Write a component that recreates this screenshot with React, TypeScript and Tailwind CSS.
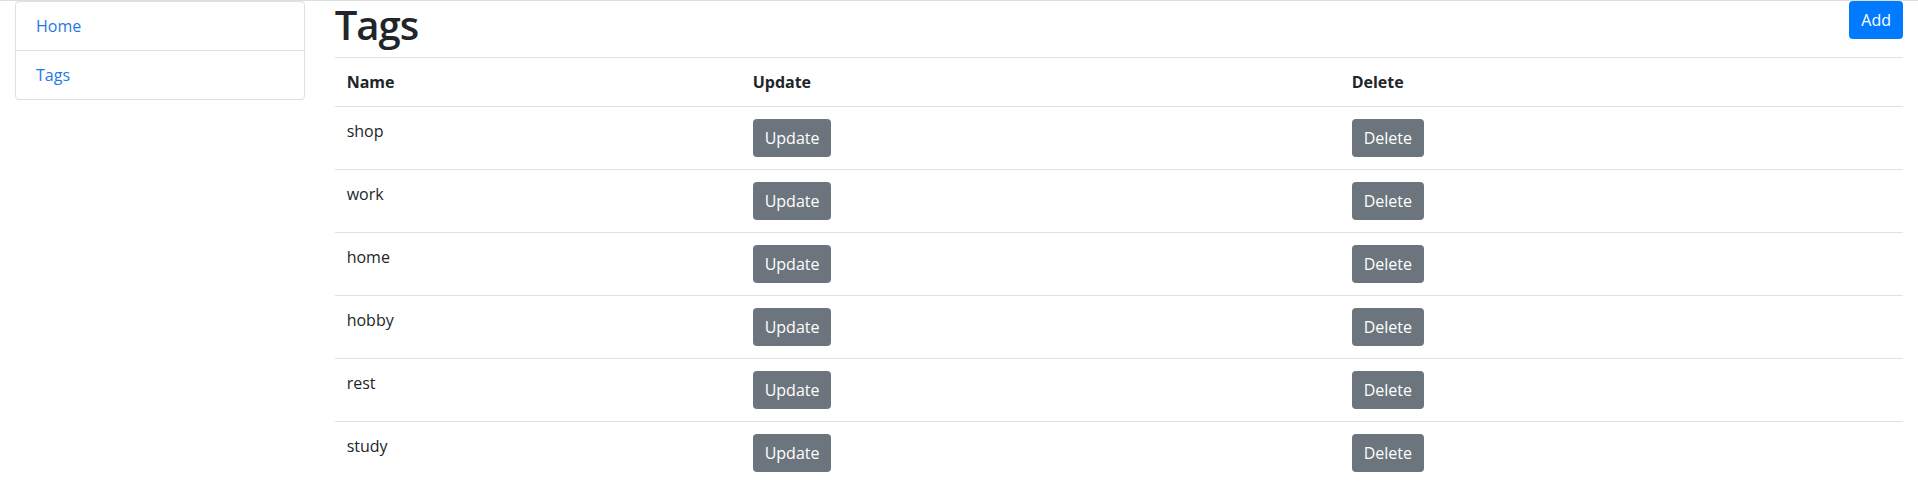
import React from "react";

const tags = ["shop", "work", "home", "hobby", "rest", "study"];

const font = { fontFamily: '"Open Sans", "Noto Sans", Arial, sans-serif' };

function SideNav() {
  return (
    <div className="w-[319.67px] shrink-0 px-[15px]">
      <div className="flex flex-col rounded border border-[#dfdfdf]">
        <a href="#" className="block px-5 py-3 text-base leading-6 text-[#1f78e6]">
          Home
        </a>
        <a href="#" className="block border-t border-[#dfdfdf] px-5 py-3 text-base leading-6 text-[#1f78e6]">
          Tags
        </a>
      </div>
    </div>
  );
}

function GrayButton({ label }: { label: string }) {
  return (
    <button className="rounded bg-[#6c757d] px-3 py-1.5 text-base leading-[26px] text-white">
      {label}
    </button>
  );
}

export default function App() {
  return (
    <div className="min-h-[500px] border-t border-[#dedede] bg-white text-[#212529]" style={font}>
      <div className="flex">
        <SideNav />

        <div className="flex-1 px-[15px]">
          {/* Title row */}
          <div className="flex items-start justify-between">
            <h1 className="mb-2 text-[40px] font-semibold leading-[48px] tracking-[-1px]">Tags</h1>
            <button className="rounded bg-[#007bff] px-3 py-1.5 text-base leading-[26px] text-white">
              Add
            </button>
          </div>

          <table className="w-full table-fixed border-collapse text-left text-base leading-6">
            <thead>
              <tr>
                <th className="w-[406px] border-t border-[#dee2e6] p-3 align-top font-bold">Name</th>
                <th className="w-[599px] border-t border-[#dee2e6] p-3 align-top font-bold">Update</th>
                <th className="border-t border-[#dee2e6] p-3 align-top font-bold">Delete</th>
              </tr>
            </thead>
            <tbody>
              {tags.map((tag) => (
                <tr key={tag}>
                  <td className="border-t border-[#dee2e6] p-3 align-top">{tag}</td>
                  <td className="border-t border-[#dee2e6] p-3 align-top">
                    <GrayButton label="Update" />
                  </td>
                  <td className="border-t border-[#dee2e6] p-3 align-top">
                    <GrayButton label="Delete" />
                  </td>
                </tr>
              ))}
            </tbody>
          </table>
        </div>
      </div>
    </div>
  );
}
